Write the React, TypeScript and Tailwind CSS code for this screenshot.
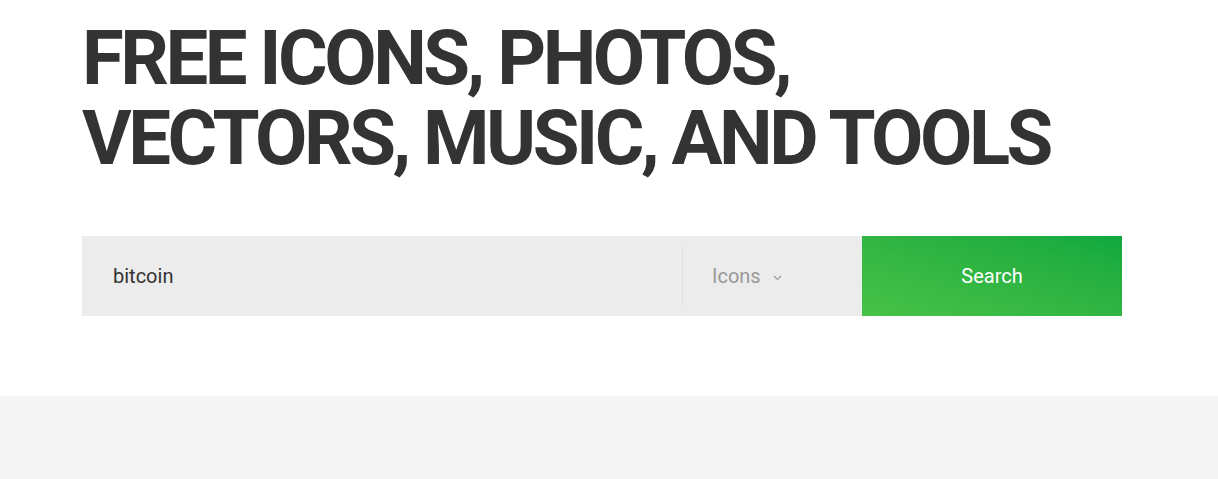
import React from 'react';

const App: React.FC = () => {
  return (
    <div className="min-h-[479px] bg-white" style={{ fontFamily: 'Roboto, "Liberation Sans", sans-serif' }}>
      <section className="px-[82px] pt-[18px] pb-[80px]">
        <h1 className="whitespace-nowrap text-[76px] leading-[80px] font-bold text-[#333333] tracking-[-3.5px]">
          <span className="block">FREE ICONS, PHOTOS,</span>
          <span className="block">VECTORS, MUSIC, AND TOOLS</span>
        </h1>

        <form className="mt-[58px] flex h-[80px] w-[1040px]" onSubmit={(e) => e.preventDefault()}>
          <div className="flex flex-1 items-center bg-[#ececec] pl-[31px]">
            <input
              defaultValue="bitcoin"
              className="w-full bg-transparent text-[20px] text-[#333333] outline-none"
            />
          </div>
          <div className="flex w-[180px] items-center bg-[#ececec]">
            <div className="h-[60px] w-px bg-[#dcdcdc]" />
            <div className="flex items-center gap-[12px] pl-[29px] text-[20px] text-[#999999]">
              <span>Icons</span>
              <svg width="9" height="6" viewBox="0 0 9 6" className="mt-[3px]">
                <path d="M1 1l3.5 3.5L8 1" fill="none" stroke="#999999" strokeWidth="1.2" />
              </svg>
            </div>
          </div>
          <button
            type="submit"
            className="w-[260px] bg-gradient-to-tr from-[#47c247] to-[#0da83e] text-[20px] text-white"
          >
            Search
          </button>
        </form>
      </section>
      <section className="h-[83px] bg-[#f5f5f5]" />
    </div>
  );
};

export default App;
